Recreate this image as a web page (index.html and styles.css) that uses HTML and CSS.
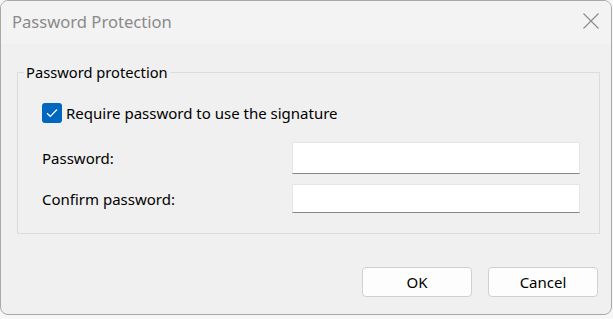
FILE: index.html
```html
<!DOCTYPE html>
<html lang="en">
<head>
<meta charset="utf-8">
<title>Password Protection</title>
<link rel="stylesheet" href="styles.css">
</head>
<body>
<div class="window">
  <div class="titlebar">
    <span class="title">Password Protection</span>
    <button class="close" aria-label="Close">
      <svg width="16" height="16" viewBox="0 0 16 16"><path d="M0.5 0.5 L15.5 15.5 M15.5 0.5 L0.5 15.5" stroke="#8a8a8a" stroke-width="1.1" fill="none"/></svg>
    </button>
  </div>
  <div class="content">
    <fieldset class="group">
      <legend>Password protection</legend>
      <div class="group-body">
        <label class="check-row">
          <span class="checkbox">
            <svg width="12" height="10" viewBox="0 0 12 10"><path d="M1 5.2 L4.3 8.3 L11 1.5" stroke="#fff" stroke-width="1.2" fill="none"/></svg>
          </span>
          <span>Require password to use the signature</span>
        </label>
        <div class="fields">
          <label class="field-label">Password:</label>
          <div class="input tall"></div>
          <label class="field-label">Confirm password:</label>
          <div class="input"></div>
        </div>
      </div>
    </fieldset>
    <div class="actions">
      <button class="btn">OK</button>
      <button class="btn">Cancel</button>
    </div>
  </div>
</div>
</body>
</html>
```

FILE: styles.css
```css
html, body {
  margin: 0;
  padding: 0;
}
body {
  width: 613px;
  height: 319px;
  overflow: hidden;
  background: #f7f7f7;
  font-family: "Noto Sans", "Open Sans", sans-serif;
  font-size: 15px;
  color: #000;
}
.window {
  position: relative;
  box-sizing: border-box;
  width: 612px;
  height: 315px;
  border: 1px solid #a9a9a9;
  border-radius: 8px;
  background: #f0f0f0;
  display: flex;
  flex-direction: column;
  overflow: hidden;
}
.window::before {
  content: "";
  position: absolute;
  left: -1px;
  top: 69px;
  width: 1px;
  height: 112px;
  background: #2a6fc9;
}
.titlebar {
  height: 43px;
  box-sizing: border-box;
  background: #f3f3f3;
  display: flex;
  align-items: center;
  justify-content: space-between;
  padding: 0 12px 3px 11px;
  flex: none;
}
.title {
  color: #8a8a8a;
  font-size: 16.6px;
}
.close {
  border: 0;
  background: transparent;
  padding: 0;
  width: 16px;
  height: 16px;
  display: flex;
}
.content {
  display: flex;
  flex-direction: column;
  padding: 18px 13px 0 16px;
}
.group {
  margin: 0;
  width: 583px;
  height: 172px;
  box-sizing: border-box;
  border: 1px solid #dcdcdc;
  padding: 0;
}
.group legend {
  padding: 0 2px;
  margin-left: 6px;
  line-height: 20px;
  font-size: 14.7px;
}
.group-body {
  padding-left: 24px;
}
.check-row {
  display: flex;
  align-items: center;
  gap: 4px;
  margin-top: 21px;
}
.checkbox {
  width: 20px;
  height: 20px;
  box-sizing: border-box;
  border-radius: 3px;
  background: #0067c0;
  display: flex;
  align-items: center;
  justify-content: center;
}
.fields {
  display: grid;
  grid-template-columns: 250px 288px;
  row-gap: 10px;
  margin-top: 19px;
  align-items: center;
}
.input {
  height: 29px;
  background: #fff;
  border: 1px solid #e6e6e6;
  border-bottom: 1px solid #868686;
  box-sizing: border-box;
}
.input.tall {
  height: 32px;
}
.actions {
  display: flex;
  justify-content: flex-end;
  gap: 16px;
  margin-top: 33px;
}
.btn {
  width: 110px;
  height: 30px;
  background: #fdfdfd;
  border: 1px solid #d0d0d0;
  border-radius: 4px;
  font-family: inherit;
  font-size: 15px;
  color: #000;
  padding: 0;
}
```
